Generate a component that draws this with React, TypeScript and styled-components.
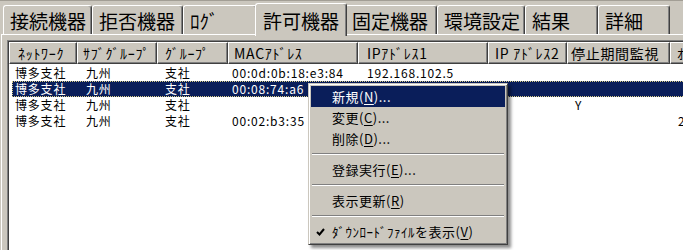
import styled, { createGlobalStyle } from "styled-components";

const FACE = "#cbc7be";
const HILITE = "#0a1e5a";
const FONT = `"Noto Sans CJK JP", "Liberation Sans", sans-serif`;

const GlobalStyle = createGlobalStyle`
  html, body {
    margin: 0;
    padding: 0;
    background: ${FACE};
  }
  body {
    font-family: ${FONT};
    color: #000;
  }
`;

const tabs = [
  { label: "接続機器", w: 89 },
  { label: "拒否機器", w: 91 },
  { label: "ﾛｸﾞ", w: 74 },
  { label: "許可機器", w: 92, active: true },
  { label: "固定機器", w: 92 },
  { label: "環境設定", w: 88 },
  { label: "結果", w: 73 },
  { label: "詳細", w: 72 },
];

// header text pad / body text pad per column
const columns = [
  { title: "ﾈｯﾄﾜｰｸ", w: 68, hp: 8, bp: 3 },
  { title: "ｻﾌﾞｸﾞﾙｰﾌﾟ", w: 80, hp: 5, bp: 9 },
  { title: "ｸﾞﾙｰﾌﾟ", w: 71, hp: 7, bp: 8 },
  { title: "MACｱﾄﾞﾚｽ", w: 130, hp: 5, bp: 4 },
  { title: "IPｱﾄﾞﾚｽ1", w: 130, hp: 8, bp: 9 },
  { title: "IP ｱﾄﾞﾚｽ2", w: 79, hp: 6, bp: 7 },
  { title: "停止期間監視", w: 103, hp: 3, bp: 8 },
  { title: "ｵﾝﾗｲﾝ日時", w: 130, hp: 6, bp: 8 },
];

const rows = [
  ["博多支社", "九州", "支社", "00:0d:0b:18:e3:84", "192.168.102.5", "", "", ""],
  ["博多支社", "九州", "支社", "00:08:74:a6", "", "", "", ""],
  ["博多支社", "九州", "支社", "", "", "", "Y", ""],
  ["博多支社", "九州", "支社", "00:02:b3:35", "", "", "", "2004/03/12"],
];

const Window = styled.div`
  position: relative;
  box-sizing: border-box;
  width: 683px;
  height: 250px;
  overflow: hidden;
  background: ${FACE};
  border-top: 1px solid #a29e95;
`;

const TabStrip = styled.div`
  position: relative;
  z-index: 1;
  display: flex;
  align-items: flex-end;
  height: 33px;
  padding-left: 3px;
`;

const Tab = styled.div<{ $w: number; $active?: boolean }>`
  position: relative;
  z-index: ${(p) => (p.$active ? 2 : 0)};
  box-sizing: border-box;
  flex: none;
  display: flex;
  align-items: center;
  width: ${(p) => p.$w}px;
  height: ${(p) => (p.$active ? 33 : 29)}px;
  margin: ${(p) => (p.$active ? "0 -2px -2px" : "0")};
  padding-left: ${(p) => (p.$active ? 7 : 6)}px;
  font-size: 19px;
  line-height: 1;
  white-space: nowrap;
  background: ${FACE};
  border-top: 1px solid #fff;
  border-left: 1px solid #fff;
  border-right: 1px solid #404040;
  border-radius: 3px 3px 0 0;
  box-shadow: inset -1px 0 0 #808080;
`;

const Panel = styled.div`
  height: 300px;
  margin-left: 1px;
  padding: 5px 0 0 5px;
  border-top: 1px solid #fff;
  border-left: 1px solid #fff;
`;

const List = styled.div`
  width: 820px;
  height: 300px;
  padding: 1px 0 0 1px;
  background: #fff;
  border: 1px solid;
  border-color: #808080 #fff #fff #808080;
  box-shadow: inset 1px 1px 0 #404040;
`;

const HeaderRow = styled.div`
  display: flex;
`;

const HeadCell = styled.div<{ $w: number; $pad: number }>`
  box-sizing: border-box;
  flex: none;
  display: flex;
  align-items: center;
  width: ${(p) => p.$w}px;
  height: 22px;
  padding-left: ${(p) => p.$pad}px;
  font-size: 14px;
  letter-spacing: 0.7px;
  white-space: nowrap;
  overflow: hidden;
  background: ${FACE};
  border-top: 1px solid #fff;
  border-left: 1px solid #fff;
  border-right: 1px solid #404040;
  border-bottom: 1px solid #404040;
  box-shadow: inset -1px -1px 0 #808080;
`;

const Body = styled.div`
  padding-top: 1px;
`;

const Row = styled.div<{ $selected?: boolean }>`
  display: flex;
  height: 16px;
  margin-left: 3px;
  line-height: 16px;
  font-size: 12px;
  letter-spacing: 0.8px;
  color: ${(p) => (p.$selected ? "#fff" : "#000")};
  background: ${(p) => (p.$selected ? HILITE : "transparent")};
  outline: ${(p) => (p.$selected ? "1px dotted #d8cc88" : "none")};
  outline-offset: -1px;
`;

const Cell = styled.div<{ $w: number; $pad: number }>`
  box-sizing: border-box;
  flex: none;
  width: ${(p) => p.$w}px;
  padding-left: ${(p) => p.$pad}px;
  white-space: nowrap;
  overflow: hidden;
`;

const Menu = styled.div`
  position: absolute;
  z-index: 5;
  left: 308px;
  top: 82px;
  box-sizing: border-box;
  width: 200px;
  padding: 2px;
  background: ${FACE};
  border: 1px solid;
  border-color: ${FACE} #404040 #404040 ${FACE};
  box-shadow: inset 1px 1px 0 #fff, inset -1px -1px 0 #808080,
    3px 3px 3px rgba(0, 0, 0, 0.45);
  font-size: 13px;
  letter-spacing: 0.5px;
`;

const Item = styled.div<{ $active?: boolean }>`
  display: flex;
  align-items: center;
  height: 21px;
  padding-left: 5px;
  white-space: nowrap;
  color: ${(p) => (p.$active ? "#fff" : "#000")};
  background: ${(p) => (p.$active ? HILITE : "transparent")};

  u {
    text-decoration: underline;
    text-underline-offset: 2px;
  }
`;

const Gutter = styled.span`
  flex: none;
  display: flex;
  align-items: center;
  width: 16px;
`;

const Separator = styled.div`
  height: 10px;
  display: flex;
  align-items: center;

  &::after {
    content: "";
    flex: 1;
    margin: 0 1px;
    border-top: 1px solid #808080;
    border-bottom: 1px solid #fff;
  }
`;

const Check = () => (
  <svg width="9" height="8" viewBox="0 0 9 8">
    <polyline
      points="1,4 3.5,6.5 8,1"
      fill="none"
      stroke="#000"
      strokeWidth="2"
    />
  </svg>
);

const MenuItem = ({
  label,
  mnemonic,
  dots,
  active,
  checked,
}: {
  label: string;
  mnemonic: string;
  dots?: boolean;
  active?: boolean;
  checked?: boolean;
}) => (
  <Item $active={active}>
    <Gutter>{checked && <Check />}</Gutter>
    <span>
      {label}(<u>{mnemonic}</u>){dots && "..."}
    </span>
  </Item>
);

export default function App() {
  return (
    <>
      <GlobalStyle />
      <Window>
        <TabStrip>
          {tabs.map((t) => (
            <Tab key={t.label} $w={t.w} $active={t.active}>
              {t.label}
            </Tab>
          ))}
        </TabStrip>
        <Panel>
          <List>
            <HeaderRow>
              {columns.map((c) => (
                <HeadCell key={c.title} $w={c.w} $pad={c.hp}>
                  {c.title}
                </HeadCell>
              ))}
            </HeaderRow>
            <Body>
              {rows.map((r, i) => (
                <Row key={i} $selected={i === 1}>
                  {r.map((v, j) => (
                    <Cell
                      key={j}
                      $w={j === 0 ? columns[j].w - 3 : columns[j].w}
                      $pad={columns[j].bp}
                    >
                      {v}
                    </Cell>
                  ))}
                </Row>
              ))}
            </Body>
          </List>
        </Panel>

        <Menu>
          <MenuItem label="新規" mnemonic="N" dots active />
          <MenuItem label="変更" mnemonic="C" dots />
          <MenuItem label="削除" mnemonic="D" dots />
          <Separator />
          <MenuItem label="登録実行" mnemonic="E" dots />
          <Separator />
          <MenuItem label="表示更新" mnemonic="R" />
          <Separator />
          <MenuItem label="ﾀﾞｳﾝﾛｰﾄﾞﾌｧｲﾙを表示" mnemonic="V" checked />
        </Menu>
      </Window>
    </>
  );
}
